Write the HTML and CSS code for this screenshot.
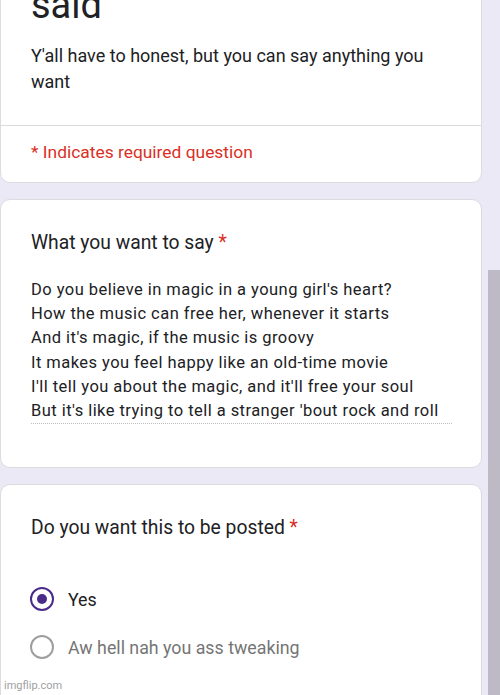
FILE: index.html
```html
<!DOCTYPE html>
<html lang="en">
<head>
    <meta charset="UTF-8">
    <meta name="viewport" content="width=device-width, initial-scale=1.0">
    <title>Form</title>
    <link rel="stylesheet" href="styles.css">
</head>
<body>

    <div class="page">
        <div class="form-column">

            <div class="card card-header">
                <div class="form-title">said</div>
                <div class="form-desc">Y'all have to honest, but you can say anything you want</div>
                <div class="divider"></div>
                <div class="required-note">* Indicates required question</div>
            </div>

            <div class="card card-question">
                <div class="question">What you want to say <span class="star">*</span></div>
                <div class="answer">Do you believe in magic in a young girl's heart?<br>How the music can free her, whenever it starts<br>And it's magic, if the music is groovy<br>It makes you feel happy like an old-time movie<br>I'll tell you about the magic, and it'll free your soul<br>But it's like trying to tell a stranger 'bout rock and roll</div>
            </div>

            <div class="card card-choice">
                <div class="question">Do you want this to be posted <span class="star">*</span></div>
                <div class="options">
                    <div class="option">
                        <span class="radio checked"></span>
                        <span class="option-label">Yes</span>
                    </div>
                    <div class="option">
                        <span class="radio"></span>
                        <span class="option-label muted">Aw hell nah you ass tweaking</span>
                    </div>
                </div>
            </div>

        </div>
        <div class="scrollbar"></div>
    </div>

    <div class="watermark">imgflip.com</div>

</body>
</html>
```

FILE: styles.css
```css
body {
    font-family: Roboto, "Liberation Sans", sans-serif;
    background-color: #ece9f6;
    margin: 0;
    padding: 0;
    color: #202124;
    overflow: hidden;
}

.page {
    display: flex;
    height: 695px;
    overflow: hidden;
}

.form-column {
    width: 482px;
}

.card {
    background-color: #ffffff;
    border: 1px solid #dadce0;
    border-radius: 10px;
}

.card-header {
    margin-top: -40px;
    padding-top: 23px;
    padding-bottom: 20px;
}

.form-title {
    font-size: 38px;
    line-height: 42px;
    padding: 0 30px;
}

.form-desc {
    font-size: 18px;
    line-height: 26px;
    margin-top: 17px;
    padding: 0 40px 0 30px;
}

.divider {
    height: 1px;
    background-color: #dadce0;
    margin-top: 30px;
}

.required-note {
    font-size: 17.4px;
    line-height: 20px;
    color: #d93025;
    margin-top: 16px;
    padding: 0 30px;
}

.card-question {
    margin-top: 16px;
    padding: 31px 30px 43px 30px;
}

.question {
    font-size: 19.3px;
    line-height: 24px;
}

.star {
    color: #d93025;
}

.answer {
    margin-top: 23px;
    font-size: 16.5px;
    line-height: 24.2px;
    letter-spacing: 0.45px;
    width: 421px;
    white-space: nowrap;
    border-bottom: 1px dotted #bdbdbd;
}

.card-choice {
    margin-top: 16px;
    padding: 31px 30px 60px 30px;
}

.options {
    margin-top: 35px;
}

.option {
    display: flex;
    align-items: center;
    height: 48px;
    gap: 14px;
}

.radio {
    width: 20px;
    height: 20px;
    border: 2px solid #9e9e9e;
    border-radius: 50%;
    display: flex;
    align-items: center;
    justify-content: center;
    flex-shrink: 0;
    margin-left: -1px;
}

.radio.checked {
    border-color: #4a2b8c;
}

.radio.checked::after {
    content: "";
    width: 10px;
    height: 10px;
    border-radius: 50%;
    background-color: #4a2b8c;
}

.option-label {
    font-size: 17.8px;
}

.muted {
    color: #757575;
}

.scrollbar {
    width: 12px;
    margin-left: 6px;
    margin-top: 270px;
    background-color: #bdbac6;
}

.watermark {
    position: absolute;
    left: 4px;
    top: 679px;
    font-size: 11px;
    color: #a0a0a0;
}
```
